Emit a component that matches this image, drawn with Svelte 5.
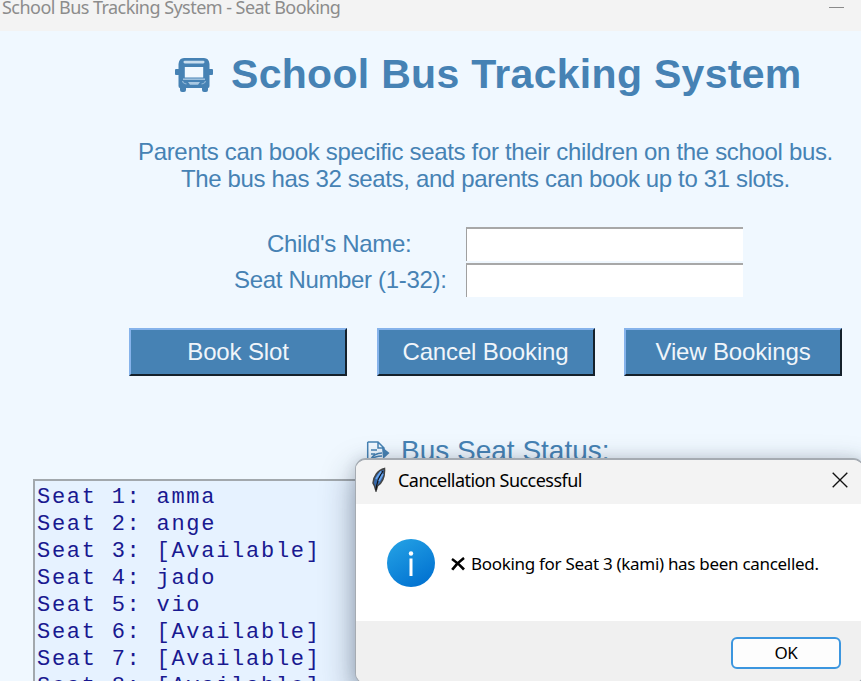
<script>
  const seats = ['amma', 'ange', '[Available]', 'jado', 'vio', '[Available]', '[Available]', '[Available]'];
  let child = $state('');
  let seat = $state('');
</script>

<div class="window">
  <header class="titlebar">
    <span class="caption">School Bus Tracking System - Seat Booking</span>
    <span class="minimize"></span>
  </header>

  <main>
    <div class="heading">
      <svg class="bus" width="38" height="34" viewBox="0 0 38 34">
        <path fill="#4682b4" d="M9 0H29Q34 0 34.500 6V11H37Q38 11 38 12V16Q38 17 37 17H34.500V28Q34.500 30 33 30V32Q33 34 31 34H29Q27 34 27 32V30H11V32Q11 34 9 34H7Q5 34 5 32V30Q3.500 30 3.500 28V17H1Q0 17 0 16V12Q0 11 1 11H3.500V6Q4 0 9 0Z" />
        <rect x="8.500" y="2.800" width="21" height="2.600" rx="1.300" fill="#c9deef" />
        <rect x="9.800" y="9" width="18.400" height="10.500" fill="#f0f8ff" />
        <path d="M8 21.200H30" stroke="#9cc0dd" stroke-width="1.600" />
        <path d="M7.500 23Q8 25.500 11.500 26M30.500 23Q30 25.500 26.500 26" stroke="#8fb6d6" stroke-width="1.200" fill="none" />
        <path d="M13 24H25L23 26.800H15Z" fill="#a9c9e3" />
      </svg>
      <h1>School Bus Tracking System</h1>
    </div>

    <p class="intro"><span class="l1">Parents can book specific seats for their children on the school bus.</span><span class="l2">The bus has 32 seats, and parents can book up to 31 slots.</span></p>

    <div class="form">
      <label for="child" class="n1">Child's Name:</label>
      <input id="child" bind:value={child} />
      <label for="seat" class="n2">Seat Number (1-32):</label>
      <input id="seat" bind:value={seat} />
    </div>

    <div class="actions">
      <button>Book Slot</button>
      <button>Cancel Booking</button>
      <button>View Bookings</button>
    </div>

    <div class="status">
      <svg width="24" height="24" viewBox="0 0 24 24" fill="none" stroke="#4682b4" stroke-width="1.500">
        <path d="M1.700 1H12L18 7V10M12 1V7H18M1.700 1V22H18V18" />
        <path d="M5 9H11M5 13H9M4 19Q8 12 16 12M4 19Q9 15 16 15" />
        <path d="M16 6L23.500 12L17 18Z" fill="#4682b4" stroke="none" />
      </svg>
      <h2>Bus Seat Status:</h2>
    </div>

    <div class="list">
      {#each seats as name, i}
        <div>Seat {i + 1}: {name}</div>
      {/each}
    </div>
  </main>

  <section class="dialog">
    <header>
      <svg class="feather" width="16" height="25" viewBox="0 0 16 25">
        <path d="M13.500 1.500C7 3 2.500 9 2 16L3.500 19L5 24L6.500 19C11 16 14 10 13.500 1.500Z" fill="#3567a8" stroke="#444" stroke-width="1.500" />
        <path d="M12 4C9 8 6 13 5 23" fill="none" stroke="#111" stroke-width="1.200" />
        <path d="M10 4.500L5 12M12 7L8 14" fill="none" stroke="#6aa6ee" stroke-width="1.600" />
      </svg>
      <span class="dtitle">Cancellation Successful</span>
      <svg class="close" width="16" height="16" viewBox="0 0 16 16"><path d="M.7 .7L15.300 15.300M15.300 .7L.7 15.300" stroke="#111" stroke-width="1.350" /></svg>
    </header>
    <div class="body">
      <svg width="48" height="48" viewBox="0 0 48 48">
        <defs><linearGradient id="blue" x1="0.2" y1="0" x2="0.8" y2="1"><stop stop-color="#23a0e4" /><stop offset="1" stop-color="#0070d0" /></linearGradient></defs>
        <circle cx="24" cy="24" r="24" fill="url(#blue)" />
        <circle cx="24" cy="14.500" r="2.200" fill="#fff" />
        <path d="M24 19.500V37" stroke="#fff" stroke-width="3" />
      </svg>
      <svg class="cross" width="14" height="14" viewBox="0 0 14 14"><path d="M1 2Q7 6 13 12.500M13 1Q6 6 1.200 12.800" fill="none" stroke="#000" stroke-width="2.600" /></svg>
      <span class="message">Booking for Seat 3 (kami) has been cancelled.</span>
    </div>
    <footer><button class="ok">OK</button></footer>
  </section>
</div>

<style>
  .window { position: relative; width: 861px; height: 681px; overflow: hidden; background: #f0f8ff; color: #4682b4; font-family: "Liberation Sans", Arial, sans-serif; }
  .titlebar { height: 31px; display: flex; justify-content: space-between; background: #f3f3f3; padding: 0 17px 0 2px; box-sizing: border-box; }
  .caption { font: 18px/24px "Noto Sans", "Open Sans", sans-serif; color: #8c8c8c; margin-top: -5px; letter-spacing: -0.54px; white-space: nowrap; }
  .minimize { width: 15px; height: 1px; margin-top: 7px; background: #8a8a8a; }
  .heading { display: flex; padding: 19px 0 0 175px; height: 69px; }
  .bus { margin-top: 8px; }
  h1 { margin: 0 0 0 18px; font-size: 41px; line-height: 48px; font-weight: bold; letter-spacing: 0.3px; white-space: nowrap; }
  .intro { margin: 0; padding: 19px 0 0; height: 56px; font-size: 24px; line-height: 27px; white-space: nowrap; }
  .intro span { display: block; }
  .l1 { padding-left: 138px; letter-spacing: -0.33px; }
  .l2 { padding-left: 181px; letter-spacing: -0.36px; }
  .form { display: grid; grid-template-columns: 212px 277px; column-gap: 20px; row-gap: 2px; margin: 33px 0 0 234px; font-size: 24px; line-height: 34px; white-space: nowrap; }
  label { letter-spacing: -0.33px; }
  .n1 { padding-left: 33px; }
  input { box-sizing: border-box; width: 277px; height: 34px; border: 0; border-top: 2px solid #a8a8a8; border-left: 1px solid #a0a0a0; background: #fff; font-size: 24px; outline: none; }
  .actions { display: flex; gap: 29.500px; margin: 31px 0 0 129px; }
  .actions button { width: 218px; height: 48px; padding: 0; border: 2px solid; border-color: #86b3eb #15212b #15212b #86b3eb; background: #4682b4; color: #f0f5fa; font: 24px/40px "Liberation Sans", Arial, sans-serif; letter-spacing: -0.15px; }
  .status { display: flex; margin: 58px 0 0 366px; height: 45px; }
  .status svg { margin-top: 7px; }
  h2 { margin: 0 0 0 11px; font-size: 28px; line-height: 34px; font-weight: normal; letter-spacing: 0; white-space: nowrap; }
  .list { box-sizing: border-box; width: 860px; height: 240px; margin-left: 33px; padding: 3px 0 0 2px; border: 2px solid #a2a8ad; background: #e6f2ff; color: #191990; font: 22px/27px "Liberation Mono", "Courier New", monospace; letter-spacing: 1.730px; white-space: pre; }
  .dialog { position: absolute; left: 355px; top: 458px; width: 509px; height: 226px; box-sizing: border-box; border: 1px solid #a5abb2; border-top-width: 2px; border-radius: 11px; overflow: hidden; background: #fff; color: #000; box-shadow: 0 14px 32px 2px rgba(35, 50, 70, .38), 0 0 14px rgba(35, 50, 70, .15); }
  .dialog header { display: flex; height: 44px; background: #f3f3f3; }
  .feather { margin: 7px 0 0 15px; }
  .dtitle { font: 18px/24px "Noto Sans", "Open Sans", sans-serif; margin: 8px 0 0 11px; letter-spacing: -0.54px; white-space: nowrap; }
  .close { margin: 12px 15px 0 auto; }
  .body { display: flex; height: 117px; padding: 35px 0 0 31px; box-sizing: border-box; }
  .cross { margin: 18px 0 0 16px; }
  .message { margin: 13px 0 0 6px; font: 17px/24px "Noto Sans", "Open Sans", sans-serif; letter-spacing: -0.3px; white-space: nowrap; }
  footer { height: 70px; background: #f0f0f0; padding: 16px 0 0 375px; box-sizing: border-box; }
  .ok { width: 110px; height: 32px; border: 2px solid #3c96df; border-radius: 6px; background: #fdfdfd; color: #000; padding: 0; font: 17px/26px "Noto Sans", "Open Sans", sans-serif; letter-spacing: -0.3px; }
</style>
